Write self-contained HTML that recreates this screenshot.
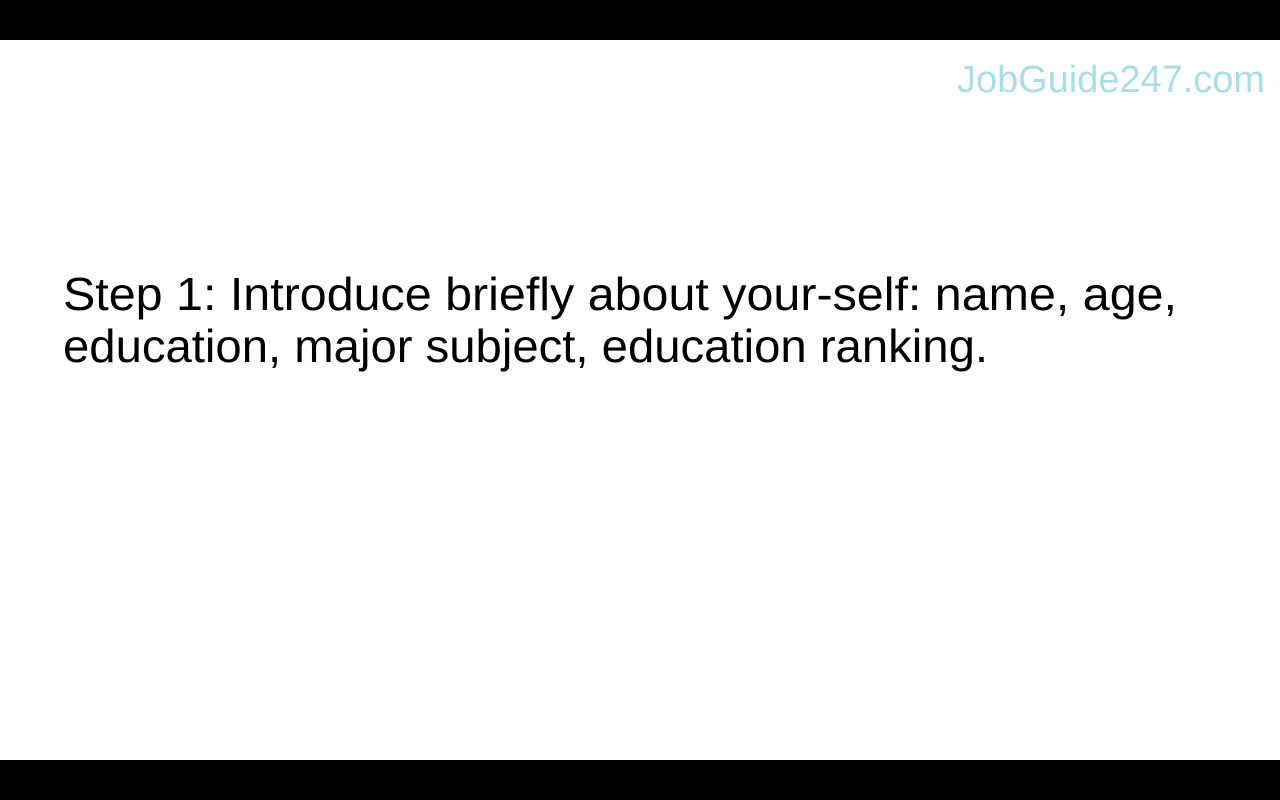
<!DOCTYPE html>
<html><head><meta charset="utf-8"><style>
html,body{margin:0;padding:0;width:1280px;height:800px;overflow:hidden;background:#fff}
.bar{position:absolute;left:0;width:1280px;height:40px;background:#000}
svg{position:absolute;left:0;top:0}
</style></head><body>
<div class="bar" style="top:0"></div>
<div class="bar" style="top:760px"></div>
<svg width="1280" height="800" xmlns="http://www.w3.org/2000/svg">
<text x="957" y="92" font-family="Liberation Sans, sans-serif" font-size="38" fill="#a9dde8" textLength="308" lengthAdjust="spacingAndGlyphs">JobGuide247.com</text>
<text x="63" y="310" font-family="Liberation Sans, sans-serif" font-size="46" fill="#000" textLength="1114" lengthAdjust="spacingAndGlyphs">Step 1: Introduce briefly about your-self: name, age,</text>
<text x="63" y="362" font-family="Liberation Sans, sans-serif" font-size="46" fill="#000" textLength="925" lengthAdjust="spacingAndGlyphs">education, major subject, education ranking.</text>
</svg>
</body></html>
